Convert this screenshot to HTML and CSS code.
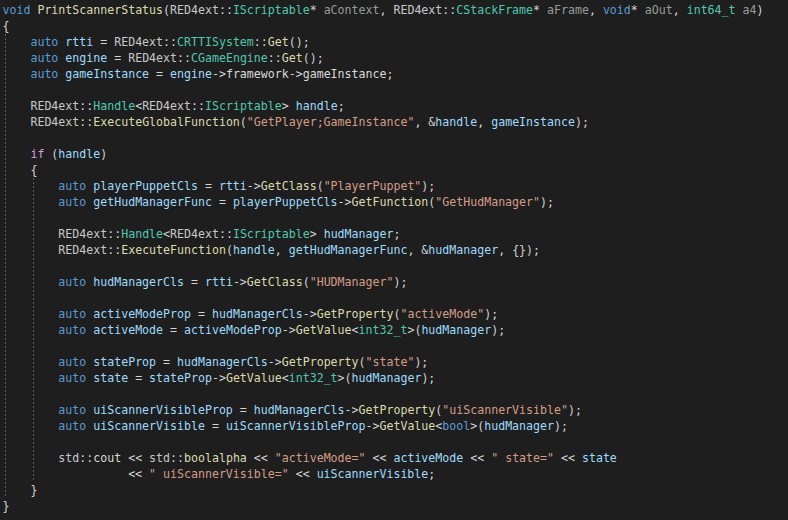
FILE: index.html
```html
<!DOCTYPE html>
<html>
<head>
<meta charset="utf-8">
<link rel="stylesheet" href="styles.css">
</head>
<body>
<div class="editor">
<div class="guide guide-outer"></div>
<div class="guide guide-inner"></div>
<pre class="code"><span class="k">void</span> <span class="f">PrintScannerStatus</span>(<span class="n">RED4ext</span>::<span class="t">IScriptable</span>* <span class="p">aContext</span>, <span class="n">RED4ext</span>::<span class="t">CStackFrame</span>* <span class="p">aFrame</span>, <span class="k">void</span>* <span class="p">aOut</span>, <span class="t">int64_t</span> <span class="p">a4</span>)
{
    <span class="k">auto</span> <span class="v">rtti</span> = <span class="n">RED4ext</span>::<span class="t">CRTTISystem</span>::<span class="f">Get</span>();
    <span class="k">auto</span> <span class="v">engine</span> = <span class="n">RED4ext</span>::<span class="t">CGameEngine</span>::<span class="f">Get</span>();
    <span class="k">auto</span> <span class="v">gameInstance</span> = <span class="v">engine</span>-&gt;<span class="m">framework</span>-&gt;<span class="m">gameInstance</span>;

    <span class="n">RED4ext</span>::<span class="t">Handle</span>&lt;<span class="n">RED4ext</span>::<span class="t">IScriptable</span>&gt; <span class="v">handle</span>;
    <span class="n">RED4ext</span>::<span class="f">ExecuteGlobalFunction</span>(<span class="s">"GetPlayer;GameInstance"</span>, &amp;<span class="v">handle</span>, <span class="v">gameInstance</span>);

    <span class="c">if</span> (<span class="v">handle</span>)
    {
        <span class="k">auto</span> <span class="v">playerPuppetCls</span> = <span class="v">rtti</span>-&gt;<span class="f">GetClass</span>(<span class="s">"PlayerPuppet"</span>);
        <span class="k">auto</span> <span class="v">getHudManagerFunc</span> = <span class="v">playerPuppetCls</span>-&gt;<span class="f">GetFunction</span>(<span class="s">"GetHudManager"</span>);

        <span class="n">RED4ext</span>::<span class="t">Handle</span>&lt;<span class="n">RED4ext</span>::<span class="t">IScriptable</span>&gt; <span class="v">hudManager</span>;
        <span class="n">RED4ext</span>::<span class="f">ExecuteFunction</span>(<span class="v">handle</span>, <span class="v">getHudManagerFunc</span>, &amp;<span class="v">hudManager</span>, {});

        <span class="k">auto</span> <span class="v">hudManagerCls</span> = <span class="v">rtti</span>-&gt;<span class="f">GetClass</span>(<span class="s">"HUDManager"</span>);

        <span class="k">auto</span> <span class="v">activeModeProp</span> = <span class="v">hudManagerCls</span>-&gt;<span class="f">GetProperty</span>(<span class="s">"activeMode"</span>);
        <span class="k">auto</span> <span class="v">activeMode</span> = <span class="v">activeModeProp</span>-&gt;<span class="f">GetValue</span>&lt;<span class="t">int32_t</span>&gt;(<span class="v">hudManager</span>);

        <span class="k">auto</span> <span class="v">stateProp</span> = <span class="v">hudManagerCls</span>-&gt;<span class="f">GetProperty</span>(<span class="s">"state"</span>);
        <span class="k">auto</span> <span class="v">state</span> = <span class="v">stateProp</span>-&gt;<span class="f">GetValue</span>&lt;<span class="t">int32_t</span>&gt;(<span class="v">hudManager</span>);

        <span class="k">auto</span> <span class="v">uiScannerVisibleProp</span> = <span class="v">hudManagerCls</span>-&gt;<span class="f">GetProperty</span>(<span class="s">"uiScannerVisible"</span>);
        <span class="k">auto</span> <span class="v">uiScannerVisible</span> = <span class="v">uiScannerVisibleProp</span>-&gt;<span class="f">GetValue</span>&lt;<span class="k">bool</span>&gt;(<span class="v">hudManager</span>);

        <span class="n">std</span>::<span class="m">cout</span> &lt;&lt; <span class="n">std</span>::<span class="f">boolalpha</span> &lt;&lt; <span class="s">"activeMode="</span> &lt;&lt; <span class="v">activeMode</span> &lt;&lt; <span class="s">" state="</span> &lt;&lt; <span class="v">state</span>
                  &lt;&lt; <span class="s">" uiScannerVisible="</span> &lt;&lt; <span class="v">uiScannerVisible</span>;
    }
}</pre>
</div>
</body>
</html>
```
FILE: styles.css
```css
html, body {
  margin: 0;
  padding: 0;
  background: #1e1e1e;
}

.editor {
  position: relative;
  width: 788px;
  height: 520px;
  overflow: hidden;
  background: #1e1e1e;
}

.code {
  margin: 0;
  padding: 2px 0 0 2.5px;
  font-family: "DejaVu Sans Mono", monospace;
  font-size: 11.6px;
  line-height: 16px;
  color: #d4d4d4;
  white-space: pre;
}

.guide {
  position: absolute;
  width: 1px;
  background: repeating-linear-gradient(to bottom, #5a5a5a 0 2px, transparent 2px 4px);
}

.guide-outer {
  left: 5px;
  top: 34px;
  height: 462px;
}

.guide-inner {
  left: 33px;
  top: 178px;
  height: 302px;
}

.k { color: #569cd6; }
.c { color: #d8a0df; }
.t { color: #4ec9b0; }
.f { color: #dcdcaa; }
.p { color: #9a9a9a; }
.v { color: #9cdcfe; }
.m { color: #dadada; }
.n { color: #c8c8c8; }
.s { color: #d69d85; }
```
